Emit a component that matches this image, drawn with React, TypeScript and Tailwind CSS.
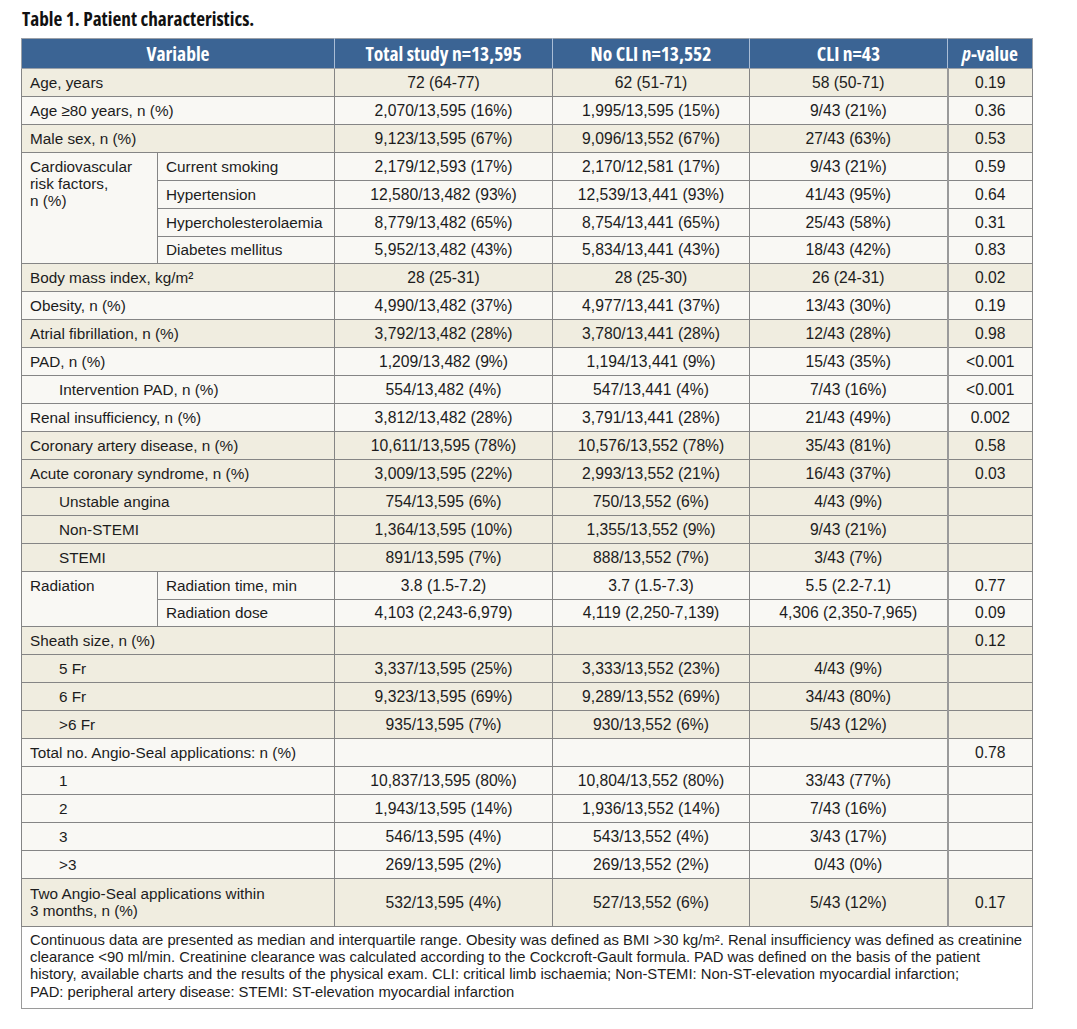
import React from "react";

type Row = {
  label?: React.ReactNode;
  indent?: boolean;
  v: string[];
  bg: "b" | "l";
  group?: { label: React.ReactNode; span: number };
  sub?: string;
  tall?: boolean;
};

const B = "bg-[#f0ede0]";
const L = "bg-[#f9f8f4]";

const rows: Row[] = [
  { label: "Age, years", v: ["72 (64-77)", "62 (51-71)", "58 (50-71)", "0.19"], bg: "b" },
  { label: "Age ≥80 years, n (%)", v: ["2,070/13,595 (16%)", "1,995/13,595 (15%)", "9/43 (21%)", "0.36"], bg: "l" },
  { label: "Male sex, n (%)", v: ["9,123/13,595 (67%)", "9,096/13,552 (67%)", "27/43 (63%)", "0.53"], bg: "b" },
  {
    group: { label: (<>Cardiovascular<br />risk factors,<br />n (%)</>), span: 4 },
    sub: "Current smoking",
    v: ["2,179/12,593 (17%)", "2,170/12,581 (17%)", "9/43 (21%)", "0.59"],
    bg: "l",
  },
  { sub: "Hypertension", v: ["12,580/13,482 (93%)", "12,539/13,441 (93%)", "41/43 (95%)", "0.64"], bg: "l" },
  { sub: "Hypercholesterolaemia", v: ["8,779/13,482 (65%)", "8,754/13,441 (65%)", "25/43 (58%)", "0.31"], bg: "l" },
  { sub: "Diabetes mellitus", v: ["5,952/13,482 (43%)", "5,834/13,441 (43%)", "18/43 (42%)", "0.83"], bg: "l" },
  { label: (<>Body mass index, kg/m²</>), v: ["28 (25-31)", "28 (25-30)", "26 (24-31)", "0.02"], bg: "b" },
  { label: "Obesity, n (%)", v: ["4,990/13,482 (37%)", "4,977/13,441 (37%)", "13/43 (30%)", "0.19"], bg: "l" },
  { label: "Atrial fibrillation, n (%)", v: ["3,792/13,482 (28%)", "3,780/13,441 (28%)", "12/43 (28%)", "0.98"], bg: "b" },
  { label: "PAD, n (%)", v: ["1,209/13,482 (9%)", "1,194/13,441 (9%)", "15/43 (35%)", "<0.001"], bg: "l" },
  { label: "Intervention PAD, n (%)", indent: true, v: ["554/13,482 (4%)", "547/13,441 (4%)", "7/43 (16%)", "<0.001"], bg: "l" },
  { label: "Renal insufficiency, n (%)", v: ["3,812/13,482 (28%)", "3,791/13,441 (28%)", "21/43 (49%)", "0.002"], bg: "l" },
  { label: "Coronary artery disease, n (%)", v: ["10,611/13,595 (78%)", "10,576/13,552 (78%)", "35/43 (81%)", "0.58"], bg: "b" },
  { label: "Acute coronary syndrome, n (%)", v: ["3,009/13,595 (22%)", "2,993/13,552 (21%)", "16/43 (37%)", "0.03"], bg: "b" },
  { label: "Unstable angina", indent: true, v: ["754/13,595 (6%)", "750/13,552 (6%)", "4/43 (9%)", ""], bg: "b" },
  { label: "Non-STEMI", indent: true, v: ["1,364/13,595 (10%)", "1,355/13,552 (9%)", "9/43 (21%)", ""], bg: "b" },
  { label: "STEMI", indent: true, v: ["891/13,595 (7%)", "888/13,552 (7%)", "3/43 (7%)", ""], bg: "b" },
  {
    group: { label: "Radiation", span: 2 },
    sub: "Radiation time, min",
    v: ["3.8 (1.5-7.2)", "3.7 (1.5-7.3)", "5.5 (2.2-7.1)", "0.77"],
    bg: "l",
  },
  { sub: "Radiation dose", v: ["4,103 (2,243-6,979)", "4,119 (2,250-7,139)", "4,306 (2,350-7,965)", "0.09"], bg: "l" },
  { label: "Sheath size, n (%)", v: ["", "", "", "0.12"], bg: "b" },
  { label: "5 Fr", indent: true, v: ["3,337/13,595 (25%)", "3,333/13,552 (23%)", "4/43 (9%)", ""], bg: "b" },
  { label: "6 Fr", indent: true, v: ["9,323/13,595 (69%)", "9,289/13,552 (69%)", "34/43 (80%)", ""], bg: "b" },
  { label: ">6 Fr", indent: true, v: ["935/13,595 (7%)", "930/13,552 (6%)", "5/43 (12%)", ""], bg: "b" },
  { label: "Total no. Angio-Seal applications: n (%)", v: ["", "", "", "0.78"], bg: "l" },
  { label: "1", indent: true, v: ["10,837/13,595 (80%)", "10,804/13,552 (80%)", "33/43 (77%)", ""], bg: "l" },
  { label: "2", indent: true, v: ["1,943/13,595 (14%)", "1,936/13,552 (14%)", "7/43 (16%)", ""], bg: "l" },
  { label: "3", indent: true, v: ["546/13,595 (4%)", "543/13,552 (4%)", "3/43 (17%)", ""], bg: "l" },
  { label: ">3", indent: true, v: ["269/13,595 (2%)", "269/13,552 (2%)", "0/43 (0%)", ""], bg: "l" },
  {
    label: (<>Two Angio-Seal applications within<br />3 months, n (%)</>),
    v: ["532/13,595 (4%)", "527/13,552 (6%)", "5/43 (12%)", "0.17"],
    bg: "b",
    tall: true,
  },
];

const bodyFont = "font-['Liberation_Sans',Arial,sans-serif]";
const headFont = "font-['Open_Sans','DejaVu_Sans_Condensed',sans-serif] [font-stretch:75%]";

export default function App() {
  return (
    <div className="bg-white min-h-[1029px] w-[1077px] pl-[21px] pt-[7px] text-[#1c1c1c]">
      <div className={`${headFont} font-bold text-[19.3px] leading-[24px] h-[31px] pl-[1px] text-[#111]`}>
        Table 1. Patient characteristics.
      </div>
      <table className={`${bodyFont} table-fixed border-collapse w-[1011px] text-[15.3px] leading-[17px]`}>
        <colgroup>
          <col className="w-[136px]" />
          <col className="w-[177px]" />
          <col className="w-[218px]" />
          <col className="w-[197px]" />
          <col className="w-[198px]" />
          <col className="w-[85px]" />
        </colgroup>
        <thead>
          <tr className={`${headFont} bg-[#3b6494] text-white font-bold text-[19.5px] h-[30px]`}>
            <th colSpan={2} className="border border-[#9aa0a8] border-r-[#a9bdd6] font-bold p-0">Variable</th>
            <th className="border border-[#9aa0a8] border-x-[#a9bdd6] font-bold p-0">Total study n=13,595</th>
            <th className="border border-[#9aa0a8] border-x-[#a9bdd6] font-bold p-0">No CLI n=13,552</th>
            <th className="border border-[#9aa0a8] border-x-[#a9bdd6] font-bold p-0">CLI n=43</th>
            <th className="border border-[#9aa0a8] border-l-[#a9bdd6] font-bold p-0">
              <span className="italic">p</span>-value
            </th>
          </tr>
        </thead>
        <tbody>
          {rows.map((r, i) => {
            const bg = r.bg === "b" ? B : L;
            const h = r.tall ? "h-[48px]" : "h-[27.93px]";
            const cell = `border border-[#858585] ${h} py-0`;
            return (
              <tr key={i} className={bg}>
                {r.group && (
                  <td rowSpan={r.group.span} className={`border border-[#858585] ${L} align-top pl-[8px] pt-[5px] pr-1`}>
                    {r.group.label}
                  </td>
                )}
                {r.sub ? (
                  <td className={`${cell} pl-[8px]`}>{r.sub}</td>
                ) : (
                  <td colSpan={2} className={`${cell} ${r.indent ? "pl-[37px]" : "pl-[8px]"}`}>
                    {r.label}
                  </td>
                )}
                {r.v.map((x, j) => (
                  <td
                    key={j}
                    className={`${cell} text-center px-0 text-[15.7px] ${j === 3 ? "border-l-2 border-l-[#9a9a9a]" : ""}`}
                  >
                    {x}
                  </td>
                ))}
              </tr>
            );
          })}
          <tr className="bg-white">
            <td colSpan={6} className="border border-[#9a9a9a] pl-[8px] pr-1 pt-[5px] pb-[7px] align-top text-[14.8px] leading-[17.3px]">
              Continuous data are presented as median and interquartile range. Obesity was defined as BMI &gt;30 kg/m². Renal insufficiency was defined as creatinine
              <br />
              clearance &lt;90 ml/min. Creatinine clearance was calculated according to the Cockcroft-Gault formula. PAD was defined on the basis of the patient
              <br />
              history, available charts and the results of the physical exam. CLI: critical limb ischaemia; Non-STEMI: Non-ST-elevation myocardial infarction;
              <br />
              PAD: peripheral artery disease: STEMI: ST-elevation myocardial infarction
            </td>
          </tr>
        </tbody>
      </table>
    </div>
  );
}
